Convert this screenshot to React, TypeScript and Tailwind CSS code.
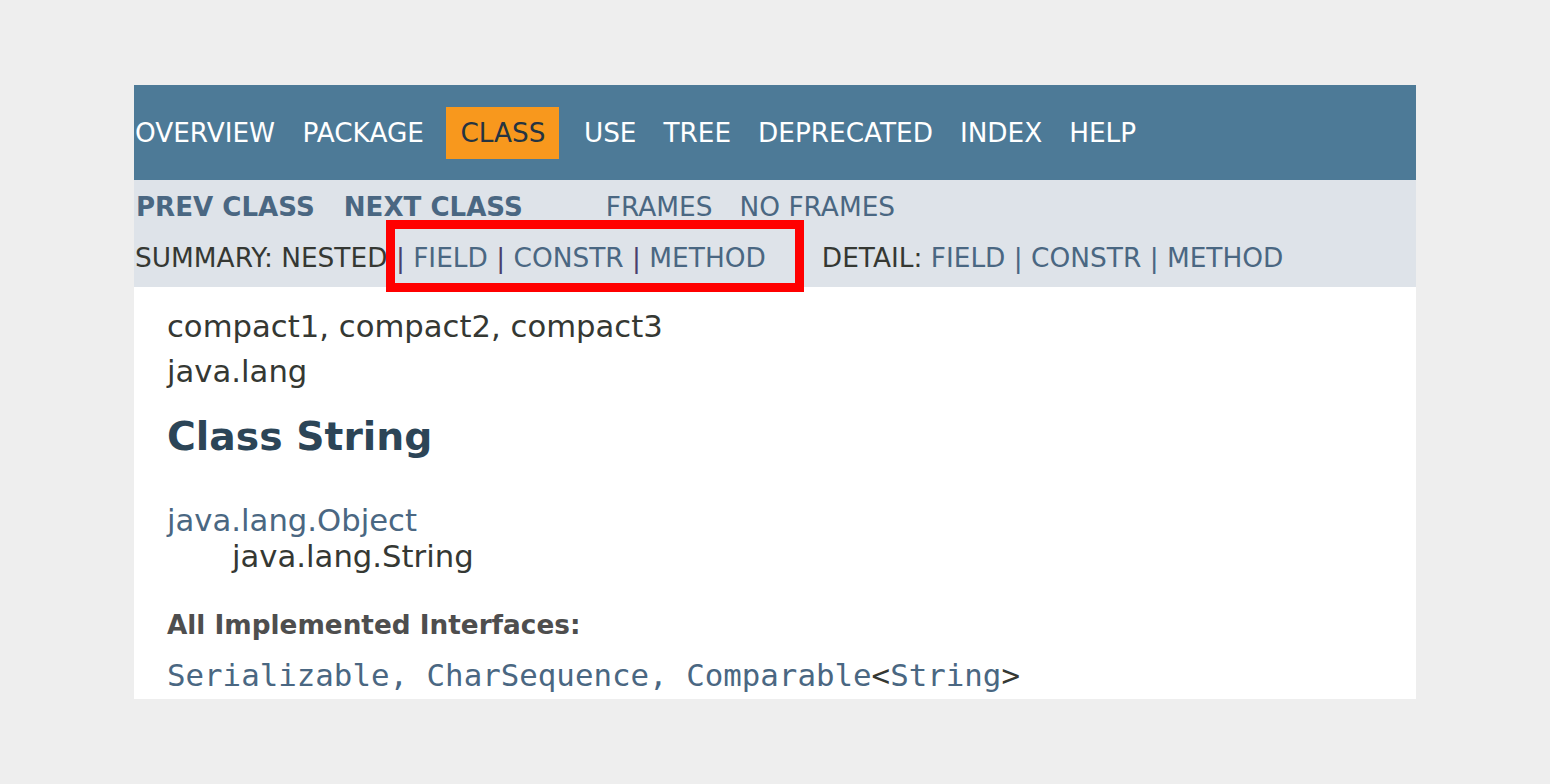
import React from "react";

const sans = { fontFamily: '"DejaVu Sans", Arial, sans-serif' };

export default function App() {
  const top = ["OVERVIEW", "PACKAGE", "CLASS", "USE", "TREE", "DEPRECATED", "INDEX", "HELP"];
  return (
    <div
      className="w-[1550px] h-[784px] bg-[#eeeeee] pt-[85px] pl-[134px] overflow-hidden"
      style={sans}
    >
      <div className="relative w-[1282px] h-[614px] bg-white overflow-hidden font-['DejaVu_Sans',Arial,sans-serif]">
        {/* top nav */}
        <div className="h-[95px] pt-[1px] bg-[#4d7a97] flex items-center text-[26.3px] text-white leading-none">
          {top.map((t, i) =>
            t === "CLASS" ? (
              <span
                key={t}
                className="ml-[9px] mr-[11px] h-[52px] px-[14px] flex items-center bg-[#f8981d] text-[#253441]"
              >
                {t}
              </span>
            ) : (
              <span key={t} className={i === 0 ? "pl-[1px] pr-[14px]" : "px-[13.5px]"}>
                {t}
              </span>
            )
          )}
        </div>
        {/* sub nav */}
        <div className="h-[107px] bg-[#dee3e9] text-[26.4px] leading-none pb-[3px]">
          <div className="h-[52px] flex items-center pt-[2px]">
            <span className="pl-[2px] font-bold text-[26.1px] text-[#4a6782]">PREV CLASS</span>
            <span className="ml-[29px] font-bold text-[26.1px] text-[#4a6782]">NEXT CLASS</span>
            <span className="ml-[83px] text-[#4a6782]">FRAMES</span>
            <span className="ml-[27px] text-[#4a6782]">NO FRAMES</span>
          </div>
          <div className="h-[52px] flex items-center whitespace-pre">
            <span className="pl-[1px] text-[#353833]">SUMMARY: NESTED</span>
            <span className="text-[#4a3f6e]"> | </span>
            <span className="text-[#4a6782]">FIELD</span>
            <span className="text-[#4a3f6e]"> | </span>
            <span className="text-[#4a6782]">CONSTR</span>
            <span className="text-[#4a3f6e]"> | </span>
            <span className="text-[#4a6782]">METHOD</span>
            <span className="ml-[56px] text-[#353833]">DETAIL: </span>
            <span className="text-[#4a6782]">FIELD</span>
            <span className="text-[#4a6782]"> | </span>
            <span className="text-[#4a6782]">CONSTR</span>
            <span className="text-[#4a6782]"> | </span>
            <span className="text-[#4a6782]">METHOD</span>
          </div>
        </div>
        {/* content */}
        <div className="pl-[33px] pt-[17px] text-[30.7px] text-[#353833]">
          <div className="leading-[45px]">compact1, compact2, compact3</div>
          <div className="leading-[45px]">java.lang</div>
          <div className="mt-[18px] leading-[50px] text-[39.3px] font-bold text-[#2c4557]">Class String</div>
          <div className="mt-[42px] leading-[34px] text-[#4a6782]">java.lang.Object</div>
          <div className="leading-[38px] pl-[65px]">java.lang.String</div>
          <div className="mt-[34px] leading-[30px] text-[26.3px] font-bold text-[#4e4e4e]">
            All Implemented Interfaces:
          </div>
          <div className="mt-[15px] leading-[40px] text-[30.8px] font-['DejaVu_Sans_Mono',monospace] text-[#4a6782] whitespace-pre">
            Serializable, CharSequence, Comparable<span className="text-[#353833]">&lt;</span>String<span className="text-[#353833]">&gt;</span>
          </div>
        </div>
        {/* red highlight box */}
        <div className="absolute left-[252px] top-[135px] w-[418px] h-[72px] border-[9px] border-[#ff0000]" />
      </div>
    </div>
  );
}
